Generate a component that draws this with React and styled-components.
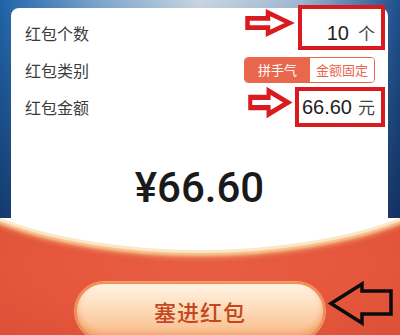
import React from 'react';
import styled, { createGlobalStyle, css } from 'styled-components';

const GlobalStyle = createGlobalStyle`
  body {
    margin: 0;
    font-family: "Liberation Sans", "Noto Sans CJK SC", sans-serif;
  }
`;

const Screen = styled.div`
  width: 400px;
  height: 335px;
  overflow: hidden;
  display: flex;
  flex-direction: column;
`;
const TopArea = styled.div`
  padding: 8px 12px 0 11px;
  background:
    linear-gradient(180deg, rgba(255, 255, 255, 0) 0%, rgba(8, 24, 60, 0.55) 100%),
    linear-gradient(90deg, #1f64a8 0%, #7ea6cc 25%, #c9d6e2 50%, #9fb8d2 75%, #1d4f8e 100%);
`;
const Card = styled.div`
  height: 210px;
  box-sizing: border-box;
  padding-top: 6px;
  background: #fff;
  border-radius: 8px 8px 0 0;
  display: flex;
  flex-direction: column;
`;
const Row = styled.div`
  position: relative;
  height: 37px;
  padding: 0 13px 0 14px;
  display: flex;
  align-items: center;
  justify-content: space-between;
`;
const Label = styled.span`
  font-size: 16px;
  color: #3c3c3c;
`;
const Value = styled.span`
  display: flex;
  align-items: baseline;
  gap: ${({ big }) => (big ? '6px' : '9px')};
  color: #222;
  font-size: 20px;
`;
const Unit = styled.span`
  font-size: 17px;
  color: #444;
`;
const Segmented = styled.div`
  display: flex;
  height: 26px;
  box-sizing: border-box;
  border: 1.5px solid #e8664c;
  border-radius: 4px;
  overflow: hidden;
`;
const Segment = styled.span`
  width: ${({ w }) => w}px;
  display: flex;
  align-items: center;
  justify-content: center;
  font-size: 13px;
  color: #e8664c;
  background: #fff;
  ${({ active }) => active && css`
    color: #fff;
    background: #e8674d;
  `}
`;
const Highlight = styled.div`
  position: absolute;
  box-sizing: border-box;
  border: 4px solid #d91a1f;
  left: ${({ l }) => l}px;
  top: ${({ t }) => t}px;
  width: ${({ w }) => w}px;
  height: ${({ h }) => h}px;
`;
const Pointer = styled.svg`
  position: absolute;
  overflow: visible;
  left: ${({ l }) => l}px;
  top: ${({ t }) => t}px;
`;
const Amount = styled.div`
  margin-top: 38px;
  text-align: center;
  font-family: Roboto, "Liberation Sans", sans-serif;
  font-weight: 500;
  font-size: 42px;
  line-height: 50px;
  color: #1a1a1a;
`;
const Envelope = styled.div`
  position: relative;
  flex: 1;
  overflow: hidden;
  background: radial-gradient(ellipse at 50% 40%, #e95d42 0%, #e4573c 60%, #dc5038 100%);
  padding-top: 64px;
  display: flex;
  flex-direction: column;
  align-items: center;

  &::before {
    content: '';
    position: absolute;
    top: -182px;
    left: -80px;
    width: 560px;
    height: 214px;
    border-radius: 50%;
    background: #fff;
    box-shadow: 0 3px 0 #fbe6c6, 0 6px 3px #f6c894, 0 9px 4px rgba(240, 150, 100, 0.6);
  }
`;
const SendButton = styled.button`
  position: relative;
  width: 250px;
  height: 58px;
  flex-shrink: 0;
  border-radius: 29px;
  border: 2px solid #f0905a;
  background: linear-gradient(180deg, #fff4e4 0%, #fddcba 45%, #f8b986 100%);
  box-shadow: inset 0 -4px 6px rgba(240, 130, 70, 0.55), 0 0 0 1px rgba(250, 190, 140, 0.7);
  font-family: "Liberation Sans", "Noto Sans CJK SC", sans-serif;
  font-size: 22px;
  font-weight: 500;
  letter-spacing: 1px;
  color: #c4471f;
  padding: 0;
`;

const RightArrow = ({ l, t, w, h }) => (
  <Pointer l={l} t={t} width={w} height={h} viewBox="0 0 47 25" preserveAspectRatio="none">
    <path d="M2.5 8 H23 V2.5 L44.5 12.5 L23 22.5 V17 H2.5 Z" fill="#fff" stroke="#d91a1f" strokeWidth="4.5" strokeLinejoin="miter" />
  </Pointer>
);

const App = () => (
  <>
    <GlobalStyle />
    <Screen>
      <TopArea>
        <Card>
          <Row>
            <Label>红包个数</Label>
            <Value>10<Unit>个</Unit></Value>
            <Highlight l={287} t={-9} w={87} h={45} />
            <RightArrow l={234} t={-4} w={47} h={26} />
          </Row>
          <Row>
            <Label>红包类别</Label>
            <Segmented>
              <Segment active w={65}>拼手气</Segment>
              <Segment w={64}>金额固定</Segment>
            </Segmented>
          </Row>
          <Row>
            <Label>红包金额</Label>
            <Value big>66.60<Unit>元</Unit></Value>
            <Highlight l={284} t={-1} w={90} h={40} />
            <RightArrow l={237} t={0} w={42} h={29} />
          </Row>
          <Amount>¥66.60</Amount>
        </Card>
      </TopArea>
      <Envelope>
        <SendButton>塞进红包</SendButton>
        <Pointer l={329} t={64} width="64" height="43" viewBox="0 0 64 43">
          <path d="M2 21.5 L33 2 V9 H62 V32 H33 V41 Z" fill="none" stroke="#0c0c0c" strokeWidth="3.5" />
        </Pointer>
      </Envelope>
    </Screen>
  </>
);

export default App;
